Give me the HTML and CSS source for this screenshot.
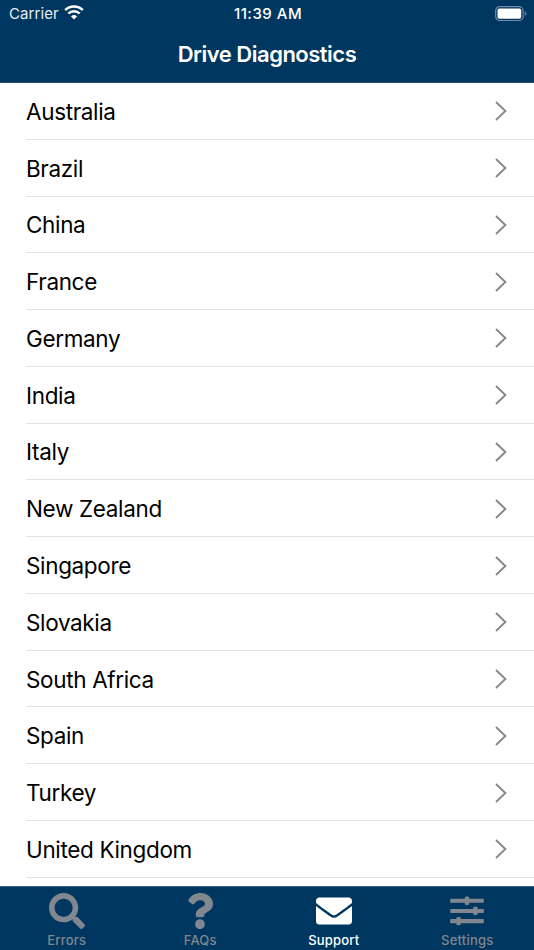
FILE: index.html
```
<!DOCTYPE html>
<html lang="en">
<head>
    <meta charset="utf-8">
    <title>Drive Diagnostics</title>
    <link rel="stylesheet" href="styles.css">
</head>
<body>
    <header class="header">
        <div class="status-bar">
            <div class="status-left">
                <span class="carrier">Carrier</span>
                <svg class="wifi" width="20" height="15" viewBox="0 0 20 15">
                    <path d="M1.200 5.200 A12.400 12.400 0 0 1 18.800 5.200" fill="none" stroke="#fff" stroke-width="2.600"/>
                    <path d="M4.300 8.500 A8.200 8.200 0 0 1 15.700 8.500" fill="none" stroke="#fff" stroke-width="2.400"/>
                    <path d="M10 14.500 L7 11.500 A4.300 4.300 0 0 1 13 11.500 Z" fill="#fff"/>
                </svg>
            </div>
            <span class="time">11:39 AM</span>
            <div class="status-right">
                <svg width="32" height="16" viewBox="0 0 32 16">
                    <rect x="0.7" y="0.7" width="27.4" height="13.8" rx="4" fill="none" stroke="#6f8ba5" stroke-width="1.2"/>
                    <rect x="2.5" y="2.5" width="23.7" height="10.2" rx="1.8" fill="#fff"/>
                    <path d="M29.8 5.2 Q31.4 5.8 31.4 7.6 Q31.4 9.4 29.8 10 Z" fill="#6f8ba5"/>
                </svg>
            </div>
        </div>
        <h1 class="title">Drive Diagnostics</h1>
    </header>

    <ul class="country-list">
        <li class="row"><span>Australia</span><svg class="chevron" viewBox="0 0 12 20"><path d="M1 1 L10.4 10 L1 19"/></svg></li>
        <li class="row"><span>Brazil</span><svg class="chevron" viewBox="0 0 12 20"><path d="M1 1 L10.4 10 L1 19"/></svg></li>
        <li class="row"><span>China</span><svg class="chevron" viewBox="0 0 12 20"><path d="M1 1 L10.4 10 L1 19"/></svg></li>
        <li class="row"><span>France</span><svg class="chevron" viewBox="0 0 12 20"><path d="M1 1 L10.4 10 L1 19"/></svg></li>
        <li class="row"><span>Germany</span><svg class="chevron" viewBox="0 0 12 20"><path d="M1 1 L10.4 10 L1 19"/></svg></li>
        <li class="row"><span>India</span><svg class="chevron" viewBox="0 0 12 20"><path d="M1 1 L10.4 10 L1 19"/></svg></li>
        <li class="row"><span>Italy</span><svg class="chevron" viewBox="0 0 12 20"><path d="M1 1 L10.4 10 L1 19"/></svg></li>
        <li class="row"><span>New Zealand</span><svg class="chevron" viewBox="0 0 12 20"><path d="M1 1 L10.4 10 L1 19"/></svg></li>
        <li class="row"><span>Singapore</span><svg class="chevron" viewBox="0 0 12 20"><path d="M1 1 L10.4 10 L1 19"/></svg></li>
        <li class="row"><span>Slovakia</span><svg class="chevron" viewBox="0 0 12 20"><path d="M1 1 L10.4 10 L1 19"/></svg></li>
        <li class="row"><span>South Africa</span><svg class="chevron" viewBox="0 0 12 20"><path d="M1 1 L10.4 10 L1 19"/></svg></li>
        <li class="row"><span>Spain</span><svg class="chevron" viewBox="0 0 12 20"><path d="M1 1 L10.4 10 L1 19"/></svg></li>
        <li class="row"><span>Turkey</span><svg class="chevron" viewBox="0 0 12 20"><path d="M1 1 L10.4 10 L1 19"/></svg></li>
        <li class="row"><span>United Kingdom</span><svg class="chevron" viewBox="0 0 12 20"><path d="M1 1 L10.4 10 L1 19"/></svg></li>
    </ul>

    <nav class="tab-bar">
        <a class="tab">
            <svg width="36" height="36" viewBox="0 0 512 512"><path fill="currentColor" d="M505 442.700 405.300 343c-4.500-4.500-10.600-7-17-7H372c27.600-35.300 44-79.700 44-128C416 93.100 322.900 0 208 0S0 93.100 0 208s93.100 208 208 208c48.300 0 92.700-16.400 128-44v16.300c0 6.400 2.500 12.500 7 17l99.700 99.700c9.400 9.400 24.600 9.400 33.900 0l28.300-28.300c9.400-9.400 9.400-24.600.1-34zM208 336c-70.700 0-128-57.200-128-128 0-70.700 57.200-128 128-128 70.700 0 128 57.200 128 128 0 70.700-57.200 128-128 128z"/></svg>
            <span>Errors</span>
        </a>
        <a class="tab">
            <svg width="28" height="36" viewBox="0 0 384 512"><path fill="currentColor" d="M202.021 0C122.202 0 70.503 32.703 29.914 91.026c-7.363 10.580-5.093 25.086 5.178 32.874l43.138 32.709c10.373 7.865 25.132 6.026 33.253-4.148 25.049-31.381 43.630-49.449 82.757-49.449 30.764 0 68.816 19.799 68.816 49.631 0 22.552-18.617 34.134-48.993 51.164-35.423 19.860-82.299 44.576-82.299 106.405V320c0 13.255 10.745 24 24 24h72.471c13.255 0 24-10.745 24-24v-5.773c0-42.860 125.268-44.645 125.268-160.627C377.504 66.256 286.902 0 202.021 0zM192 373.459c-38.196 0-69.271 31.075-69.271 69.271 0 38.195 31.075 69.270 69.271 69.270s69.271-31.075 69.271-69.271-31.075-69.270-69.271-69.270z"/></svg>
            <span>FAQs</span>
        </a>
        <a class="tab active">
            <svg width="36" height="36" viewBox="0 0 512 512"><path fill="currentColor" d="M502.300 190.800c3.900-3.100 9.700-.2 9.700 4.700V400c0 26.500-21.500 48-48 48H48c-26.500 0-48-21.500-48-48V195.600c0-5 5.700-7.800 9.700-4.700 22.400 17.400 52.100 39.500 154.100 113.600 21.100 15.400 56.700 47.800 92.200 47.600 35.700.3 72-32.800 92.300-47.600 102-74.100 131.600-96.300 154-113.700zM256 320c23.200.4 56.600-29.200 73.400-41.400 132.700-96.300 142.800-104.700 173.400-128.700 5.800-4.500 9.200-11.500 9.200-18.900v-19c0-26.500-21.500-48-48-48H48c-26.500 0-48 21.500-48 48v19c0 7.400 3.400 14.300 9.200 18.900 30.600 23.900 40.700 32.400 173.400 128.700 16.800 12.200 50.200 41.800 73.400 41.400z"/></svg>
            <span>Support</span>
        </a>
        <a class="tab">
            <svg width="36" height="36" viewBox="0 0 36 36" fill="currentColor">
                <rect x="1.200" y="5.700" width="33.600" height="4.100" rx=".8"/>
                <rect x="15.800" y="3.500" width="4.400" height="8.400" rx="1.400"/>
                <rect x="1.200" y="15.900" width="33.600" height="4.100" rx=".8"/>
                <rect x="24.200" y="13.700" width="4.400" height="8.400" rx="1.400"/>
                <rect x="1.200" y="26.100" width="33.600" height="4.100" rx=".8"/>
                <rect x="7.400" y="23.900" width="4.400" height="8.400" rx="1.400"/>
            </svg>
            <span>Settings</span>
        </a>
    </nav>
</body>
</html>
```
FILE: styles.css
```
* { box-sizing: border-box; }
body {
    margin: 0;
    height: 950px;
    display: flex;
    flex-direction: column;
    overflow: hidden;
    background: #fff;
    color: #000;
    font-family: Inter, "Liberation Sans", sans-serif;
}

/* Header */
.header {
    flex: none;
    height: 83px;
    background: #003760;
    color: #fff;
    border-bottom: 1px solid #224f75;
}
.status-bar {
    height: 27px;
    display: grid;
    grid-template-columns: 1fr auto 1fr;
    align-items: center;
    padding: 0 7px 0 9px;
    font-size: 15px;
}
.status-left { display: flex; align-items: center; gap: 5px; }
.carrier { letter-spacing: 0.1px; color: #e9eef2; }
.wifi { margin-top: -2px; }
.time { font-size: 15px; font-weight: 500; letter-spacing: 0.5px; }
.status-right { display: flex; justify-content: flex-end; }
.title {
    margin: 0;
    line-height: 54px;
    text-align: center;
    font-size: 22px;
    font-weight: 600;
    letter-spacing: -0.5px;
}

/* Country list */
.country-list {
    flex: 1;
    min-height: 0;
    margin: 0;
    padding: 0 0 0 26px;
    list-style: none;
}
.row {
    height: 56.77px;
    display: flex;
    align-items: center;
    justify-content: space-between;
    padding: 1px 27px 0 0;
    border-bottom: 1px solid #e3e3e5;
    font-size: 22.5px;
    letter-spacing: -0.35px;
}
.chevron {
    width: 12px;
    height: 20px;
    fill: none;
    stroke: #87878b;
    stroke-width: 1.9;
}

/* Tab bar */
.tab-bar {
    flex: none;
    height: 64px;
    display: flex;
    background: #003760;
    border-top: 1px solid #3b607f;
}
.tab {
    flex: 1;
    display: flex;
    flex-direction: column;
    align-items: center;
    padding-top: 6px;
    color: #80878e;
    font-size: 13px;
    font-weight: 500;
    letter-spacing: 0.2px;
}
.tab span { line-height: 16px; margin-top: 3px; }
.tab.active { color: #fff; }
```
